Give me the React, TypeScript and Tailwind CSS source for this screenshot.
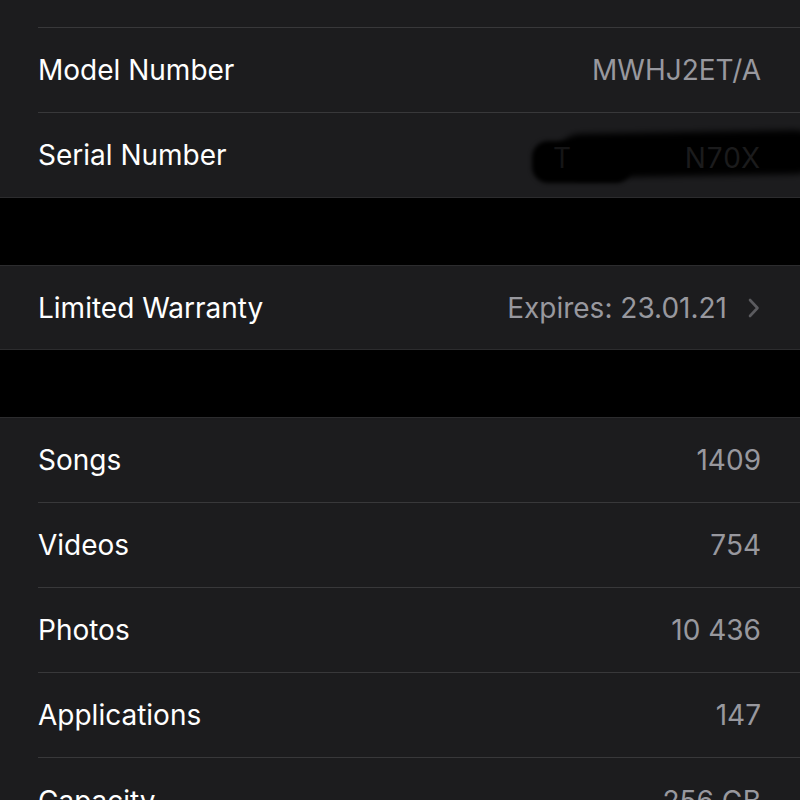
import React from "react";

type Item = { label: string; value: string };

const Row = ({
  label,
  value,
  last,
  h = "h-[85px]",
  chevron,
  children,
}: {
  label: string;
  value?: string;
  last?: boolean;
  h?: string;
  chevron?: boolean;
  children?: React.ReactNode;
}) => (
  <div className="pl-[38px]">
    <div
      className={`relative flex ${h} items-center justify-between pr-[39px] ${
        last ? "" : "border-b border-[#38383a]"
      }`}
    >
      <span className="text-[28px] text-white">{label}</span>
      <div className="flex items-center">
        {value && <span className="text-[28px] text-[#98989e]">{value}</span>}
        {chevron && (
          <svg width="12" height="20" viewBox="0 0 12 20" className="ml-[21px] mr-[1px]">
            <path
              d="M2 2 L9.5 10 L2 18"
              fill="none"
              stroke="#5b5b5f"
              strokeWidth="2.6"
              strokeLinecap="round"
              strokeLinejoin="round"
            />
          </svg>
        )}
      </div>
      {children}
    </div>
  </div>
);

const stats: Item[] = [
  { label: "Songs", value: "1409" },
  { label: "Videos", value: "754" },
  { label: "Photos", value: "10 436" },
  { label: "Applications", value: "147" },
  { label: "Capacity", value: "256 GB" },
];

export default function App() {
  return (
    <div
      className="h-[800px] w-[800px] overflow-hidden bg-black"
      style={{ fontFamily: "Inter, 'Noto Sans', sans-serif" }}
    >
      <div className="border-b border-[#2c2c2e] bg-[#1c1c1e]">
        <div className="pl-[38px]">
          <div className="h-[28px] border-b border-[#38383a]" />
        </div>
        <Row label="Model Number" value="MWHJ2ET/A" />
        <Row label="Serial Number" last h="h-[84px]">
          {/* redaction scribble */}
          <div className="absolute left-[494px] top-[28px] h-[42px] w-[100px] rounded-[16px] bg-black blur-[2px]" />
          <div className="absolute left-[520px] top-[19px] h-[44px] w-[260px] -rotate-1 rounded-[22px] bg-black blur-[3px]" />
          <span className="absolute left-[515px] top-[24px] text-[28px] text-[#151516]">T</span>
          <span className="absolute right-[39px] top-[24px] text-[28px] tracking-[1px] text-[#1b1b1c]">
            N70X
          </span>
        </Row>
      </div>
      <div className="h-[67px]" />
      <div className="border-y border-[#2c2c2e] bg-[#1c1c1e]">
        <Row label="Limited Warranty" value="Expires: 23.01.21" chevron last h="h-[83px]" />
      </div>
      <div className="h-[67px]" />
      <div className="border-t border-[#2c2c2e] bg-[#1c1c1e]">
        {stats.map((s, i) => (
          <Row key={s.label} label={s.label} value={s.value} last={i === stats.length - 1} />
        ))}
      </div>
    </div>
  );
}
